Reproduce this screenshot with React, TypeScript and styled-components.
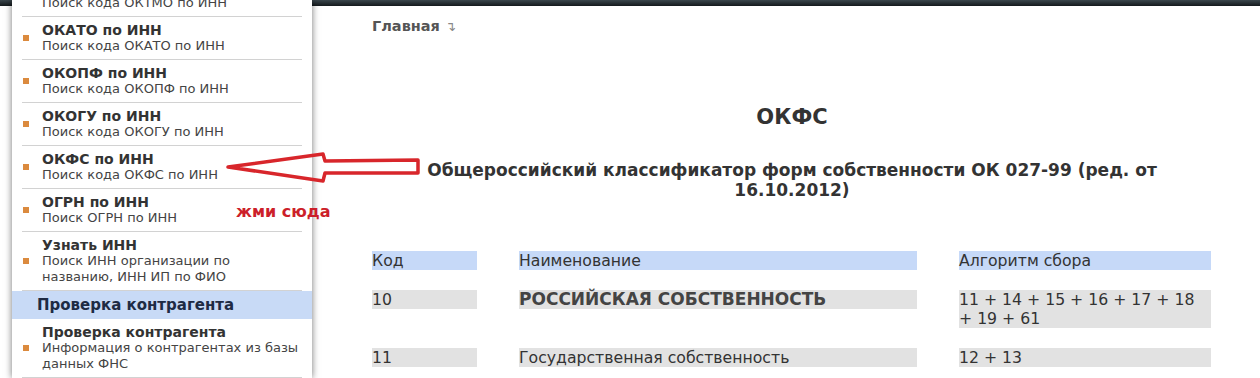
import styled, { createGlobalStyle } from "styled-components";

const GlobalStyle = createGlobalStyle`
  html, body {
    margin: 0;
    padding: 0;
    background: #fff;
  }
  body {
    font-family: "DejaVu Sans", Verdana, sans-serif;
    color: #333;
  }
`;

const Page = styled.div`
  position: relative;
  display: flex;
  width: 1260px;
  height: 378px;
  overflow: hidden;
  background: linear-gradient(180deg, #3b464c 0%, #14191c 100%) top / 100% 6px no-repeat, #fff;
`;

const Sidebar = styled.aside`
  flex: none;
  width: 300px;
  margin-left: 12px;
  background: #fff;
  box-shadow: 0 0 7px rgba(0, 0, 0, 0.55);
  overflow: hidden;
`;

const MenuList = styled.ul<{ $scrolled?: boolean }>`
  list-style: none;
  margin: ${(p) => (p.$scrolled ? "-26px" : "0")} 0 0;
  padding: 0;
`;

const MenuItem = styled.li`
  display: flex;
  align-items: center;
  margin: 0 10px;
  padding: 5px 0;
  border-bottom: 1px solid #d2d2d2;
`;

const Bullet = styled.span`
  flex: none;
  width: 6px;
  height: 6px;
  margin: 0 13px 0 1px;
  background: #db8a3e;
`;

const ItemText = styled.div`
  font-size: 13px;
  line-height: 16px;
  color: #444;
`;

const ItemTitle = styled.div`
  font-size: 14px;
  font-weight: bold;
  color: #333;
`;

const SectionHeader = styled.div`
  height: 28px;
  padding-left: 25px;
  background: #c8daf6;
  font-size: 15px;
  font-weight: bold;
  line-height: 28px;
  color: #1e2b44;
`;

const Main = styled.main`
  flex: none;
  width: 840px;
  margin-left: 60px;
  display: flex;
  flex-direction: column;
`;

const Breadcrumbs = styled.div`
  margin-top: 18px;
  font-size: 14.5px;
  line-height: 16px;
  font-weight: bold;
  color: #555;
`;

const CrumbArrow = styled.span`
  margin-left: 5px;
  font-size: 13px;
  font-weight: normal;
  color: #888;
`;

const Title = styled.h1`
  margin: 69px 0 0;
  font-size: 21px;
  line-height: 26px;
  text-align: center;
  color: #333;
`;

const Subtitle = styled.h2`
  align-self: center;
  max-width: 790px;
  margin: 30px 0 0;
  font-size: 17px;
  line-height: 20px;
  text-align: center;
  color: #333;
`;

const Table = styled.div`
  display: grid;
  grid-template-columns: 105px 398px 252px;
  column-gap: 42px;
  row-gap: 20px;
  align-items: start;
  margin-top: 51px;
`;

const Cell = styled.div<{ $head?: boolean; $strong?: boolean }>`
  background: ${(p) => (p.$head ? "#c6d9f8" : "#e2e2e2")};
  font-size: ${(p) => (p.$strong ? "17px" : "15.7px")};
  font-weight: ${(p) => (p.$strong ? "bold" : "normal")};
  line-height: 19px;
  color: ${(p) => (p.$strong ? "#444" : "#333")};
`;

const Annotation = styled.div`
  position: absolute;
  left: 0;
  top: 0;
  width: 0;
  height: 0;
`;

const ArrowSvg = styled.svg`
  position: absolute;
  left: 0;
  top: 0;
  overflow: visible;
`;

const ClickHere = styled.span`
  position: absolute;
  left: 236px;
  top: 202px;
  white-space: nowrap;
  font-size: 16px;
  font-weight: bold;
  line-height: 20px;
  color: #cc1f2a;
`;

const menu = [
  { title: "ОКТМО по ИНН", sub: "Поиск кода ОКТМО по ИНН" },
  { title: "ОКАТО по ИНН", sub: "Поиск кода ОКАТО по ИНН" },
  { title: "ОКОПФ по ИНН", sub: "Поиск кода ОКОПФ по ИНН" },
  { title: "ОКОГУ по ИНН", sub: "Поиск кода ОКОГУ по ИНН" },
  { title: "ОКФС по ИНН", sub: "Поиск кода ОКФС по ИНН" },
  { title: "ОГРН по ИНН", sub: "Поиск ОГРН по ИНН" },
  { title: "Узнать ИНН", sub: "Поиск ИНН организации по названию, ИНН ИП по ФИО" },
];

const rows = [
  { code: "10", name: "РОССИЙСКАЯ СОБСТВЕННОСТЬ", algo: "11 + 14 + 15 + 16 + 17 + 18 + 19 + 61", strong: true },
  { code: "11", name: "Государственная собственность", algo: "12 + 13" },
];

const Item = ({ title, sub }: { title: string; sub: string }) => (
  <MenuItem>
    <Bullet />
    <ItemText>
      <ItemTitle>{title}</ItemTitle>
      {sub}
    </ItemText>
  </MenuItem>
);

export default function App() {
  return (
    <>
      <GlobalStyle />
      <Page>
        <Sidebar>
          <MenuList $scrolled>
            {menu.map((m) => (
              <Item key={m.title} {...m} />
            ))}
          </MenuList>
          <SectionHeader>Проверка контрагента</SectionHeader>
          <MenuList>
            <Item title="Проверка контрагента" sub="Информация о контрагентах из базы данных ФНС" />
          </MenuList>
        </Sidebar>

        <Main>
          <Breadcrumbs>
            Главная<CrumbArrow>↴</CrumbArrow>
          </Breadcrumbs>
          <Title>ОКФС</Title>
          <Subtitle>Общероссийский классификатор форм собственности ОК 027-99 (ред. от 16.10.2012)</Subtitle>
          <Table>
            <Cell $head>Код</Cell>
            <Cell $head>Наименование</Cell>
            <Cell $head>Алгоритм сбора</Cell>
            {rows.flatMap((r) => [
              <Cell key={r.code + "c"}>{r.code}</Cell>,
              <Cell key={r.code + "n"} $strong={r.strong}>
                {r.name}
              </Cell>,
              <Cell key={r.code + "a"}>{r.algo}</Cell>,
            ])}
          </Table>
        </Main>

        <Annotation>
          <ArrowSvg width="1" height="1">
            <polygon
              points="228,167 323,154 325,161 418,160 418,173 325,173 323,181"
              fill="none"
              stroke="#d8262b"
              strokeWidth="3.5"
              strokeLinejoin="round"
            />
          </ArrowSvg>
          <ClickHere>жми сюда</ClickHere>
        </Annotation>
      </Page>
    </>
  );
}
